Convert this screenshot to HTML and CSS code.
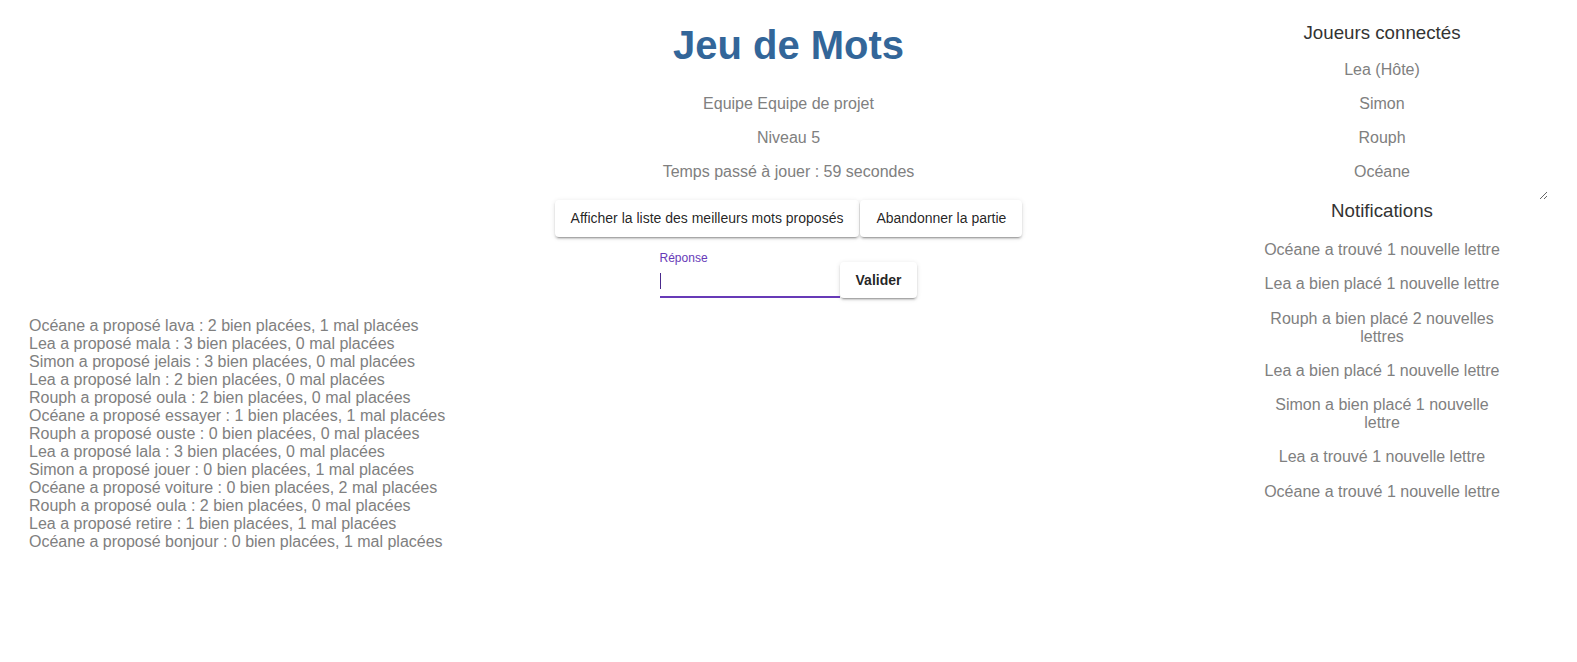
FILE: index.html
```html
<!DOCTYPE html>
<html lang="fr">
<head>
<meta charset="utf-8">
<title>Jeu de Mots</title>
<link rel="stylesheet" href="styles.css">
</head>
<body>
<div class="page">
  <main class="center">
    <h1 class="title">Jeu de Mots</h1>
    <p class="info">Equipe Equipe de projet</p>
    <p class="info">Niveau 5</p>
    <p class="info">Temps passé à jouer : 59 secondes</p>
    <div class="actions">
      <button class="btn">Afficher la liste des meilleurs mots proposés</button>
      <button class="btn">Abandonner la partie</button>
    </div>
    <form class="answer-row" onsubmit="return false">
      <label class="field is-focused">
        <span class="field-label">Réponse</span>
        <input class="field-input" type="text" autofocus>
      </label>
      <button class="btn btn-strong" type="submit">Valider</button>
    </form>
  </main>

  <section class="log">
    <div class="log-line">Océane a proposé lava : 2 bien placées, 1 mal placées</div>
    <div class="log-line">Lea a proposé mala : 3 bien placées, 0 mal placées</div>
    <div class="log-line">Simon a proposé jelais : 3 bien placées, 0 mal placées</div>
    <div class="log-line">Lea a proposé laln : 2 bien placées, 0 mal placées</div>
    <div class="log-line">Rouph a proposé oula : 2 bien placées, 0 mal placées</div>
    <div class="log-line">Océane a proposé essayer : 1 bien placées, 1 mal placées</div>
    <div class="log-line">Rouph a proposé ouste : 0 bien placées, 0 mal placées</div>
    <div class="log-line">Lea a proposé lala : 3 bien placées, 0 mal placées</div>
    <div class="log-line">Simon a proposé jouer : 0 bien placées, 1 mal placées</div>
    <div class="log-line">Océane a proposé voiture : 0 bien placées, 2 mal placées</div>
    <div class="log-line">Rouph a proposé oula : 2 bien placées, 0 mal placées</div>
    <div class="log-line">Lea a proposé retire : 1 bien placées, 1 mal placées</div>
    <div class="log-line">Océane a proposé bonjour : 0 bien placées, 1 mal placées</div>
  </section>

  <aside class="side">
    <div class="players">
      <h3 class="side-title">Joueurs connectés</h3>
      <p class="info">Lea (Hôte)</p>
      <p class="info">Simon</p>
      <p class="info">Rouph</p>
      <p class="info">Océane</p>
    </div>
    <h3 class="side-title side-title-flush">Notifications</h3>
    <div class="notifs">
      <p class="info notif">Océane a trouvé 1 nouvelle lettre</p>
      <p class="info notif">Lea a bien placé 1 nouvelle lettre</p>
      <p class="info notif">Rouph a bien placé 2 nouvelles lettres</p>
      <p class="info notif">Lea a bien placé 1 nouvelle lettre</p>
      <p class="info notif">Simon a bien placé 1 nouvelle lettre</p>
      <p class="info notif">Lea a trouvé 1 nouvelle lettre</p>
      <p class="info notif">Océane a trouvé 1 nouvelle lettre</p>
    </div>
  </aside>
</div>
</body>
</html>
```

FILE: styles.css
```css
html, body {
  background: #ffffff;
}

body {
  margin: 8px;
  font-family: "Liberation Sans", Arial, sans-serif;
  font-size: 16px;
  line-height: 18px;
  color: #808080;
}

.page {
  display: grid;
  grid-template-columns: 1fr auto 1fr;
  grid-template-areas:
    ".   center side"
    "log .      side";
  padding: 0 21px;
}

.center {
  grid-area: center;
  text-align: center;
}

.title {
  margin: 14px 0 27px;
  font-size: 40px;
  line-height: 46px;
  font-weight: 700;
  color: #336699;
}

.info {
  margin: 16px 0;
  color: #808080;
}

.actions {
  display: flex;
  justify-content: center;
  gap: 1px;
  margin-top: 19px;
}

.btn {
  font-family: "Liberation Sans", Arial, sans-serif;
  font-size: 14px;
  line-height: 24.5px;
  font-weight: 400;
  color: rgba(0, 0, 0, 0.87);
  background: #ffffff;
  border: 0;
  border-radius: 4px;
  padding: 6px 16px;
  box-shadow: 0px 3px 1px -2px rgba(0, 0, 0, 0.2),
              0px 2px 2px 0px rgba(0, 0, 0, 0.14),
              0px 1px 5px 0px rgba(0, 0, 0, 0.12);
  cursor: pointer;
}

.btn-strong {
  font-weight: 700;
  padding: 6px 16px;
}

.answer-row {
  display: flex;
  justify-content: center;
  align-items: flex-end;
  margin: 13.5px 0 0;
}

.field {
  position: relative;
  display: flex;
  flex-direction: column;
  width: 180px;
  text-align: left;
}

.field.is-focused::after {
  content: "";
  position: absolute;
  left: 0;
  top: 23px;
  width: 1px;
  height: 16px;
  background: #4a2a8c;
}

.field-label {
  display: block;
  font-size: 12px;
  line-height: 16px;
  color: #673ab7;
}

.field-input {
  box-sizing: border-box;
  width: 100%;
  height: 32px;
  padding: 4px 0 5px;
  border: 0;
  border-bottom: 2px solid #673ab7;
  font-family: "Liberation Sans", Arial, sans-serif;
  font-size: 16px;
  color: rgba(0, 0, 0, 0.87);
  background: transparent;
  outline: none;
  caret-color: transparent;
}

.log {
  grid-area: log;
  margin-top: 19px;
}

.log-line {
  color: #808080;
}

.side {
  grid-area: side;
  justify-self: end;
  width: 332px;
  text-align: center;
}

.players {
  box-sizing: border-box;
  height: 192px;
  overflow: auto;
  resize: vertical;
}

.side-title {
  margin: 14px 0 18px;
  font-size: 18.72px;
  line-height: 21px;
  font-weight: 400;
  color: #333333;
}

.side-title-flush {
  margin: 0 0 20px;
}

.notifs {
  width: 250px;
  margin: 0 auto;
}

.notif {
  margin: 16.25px 0;
}
```
